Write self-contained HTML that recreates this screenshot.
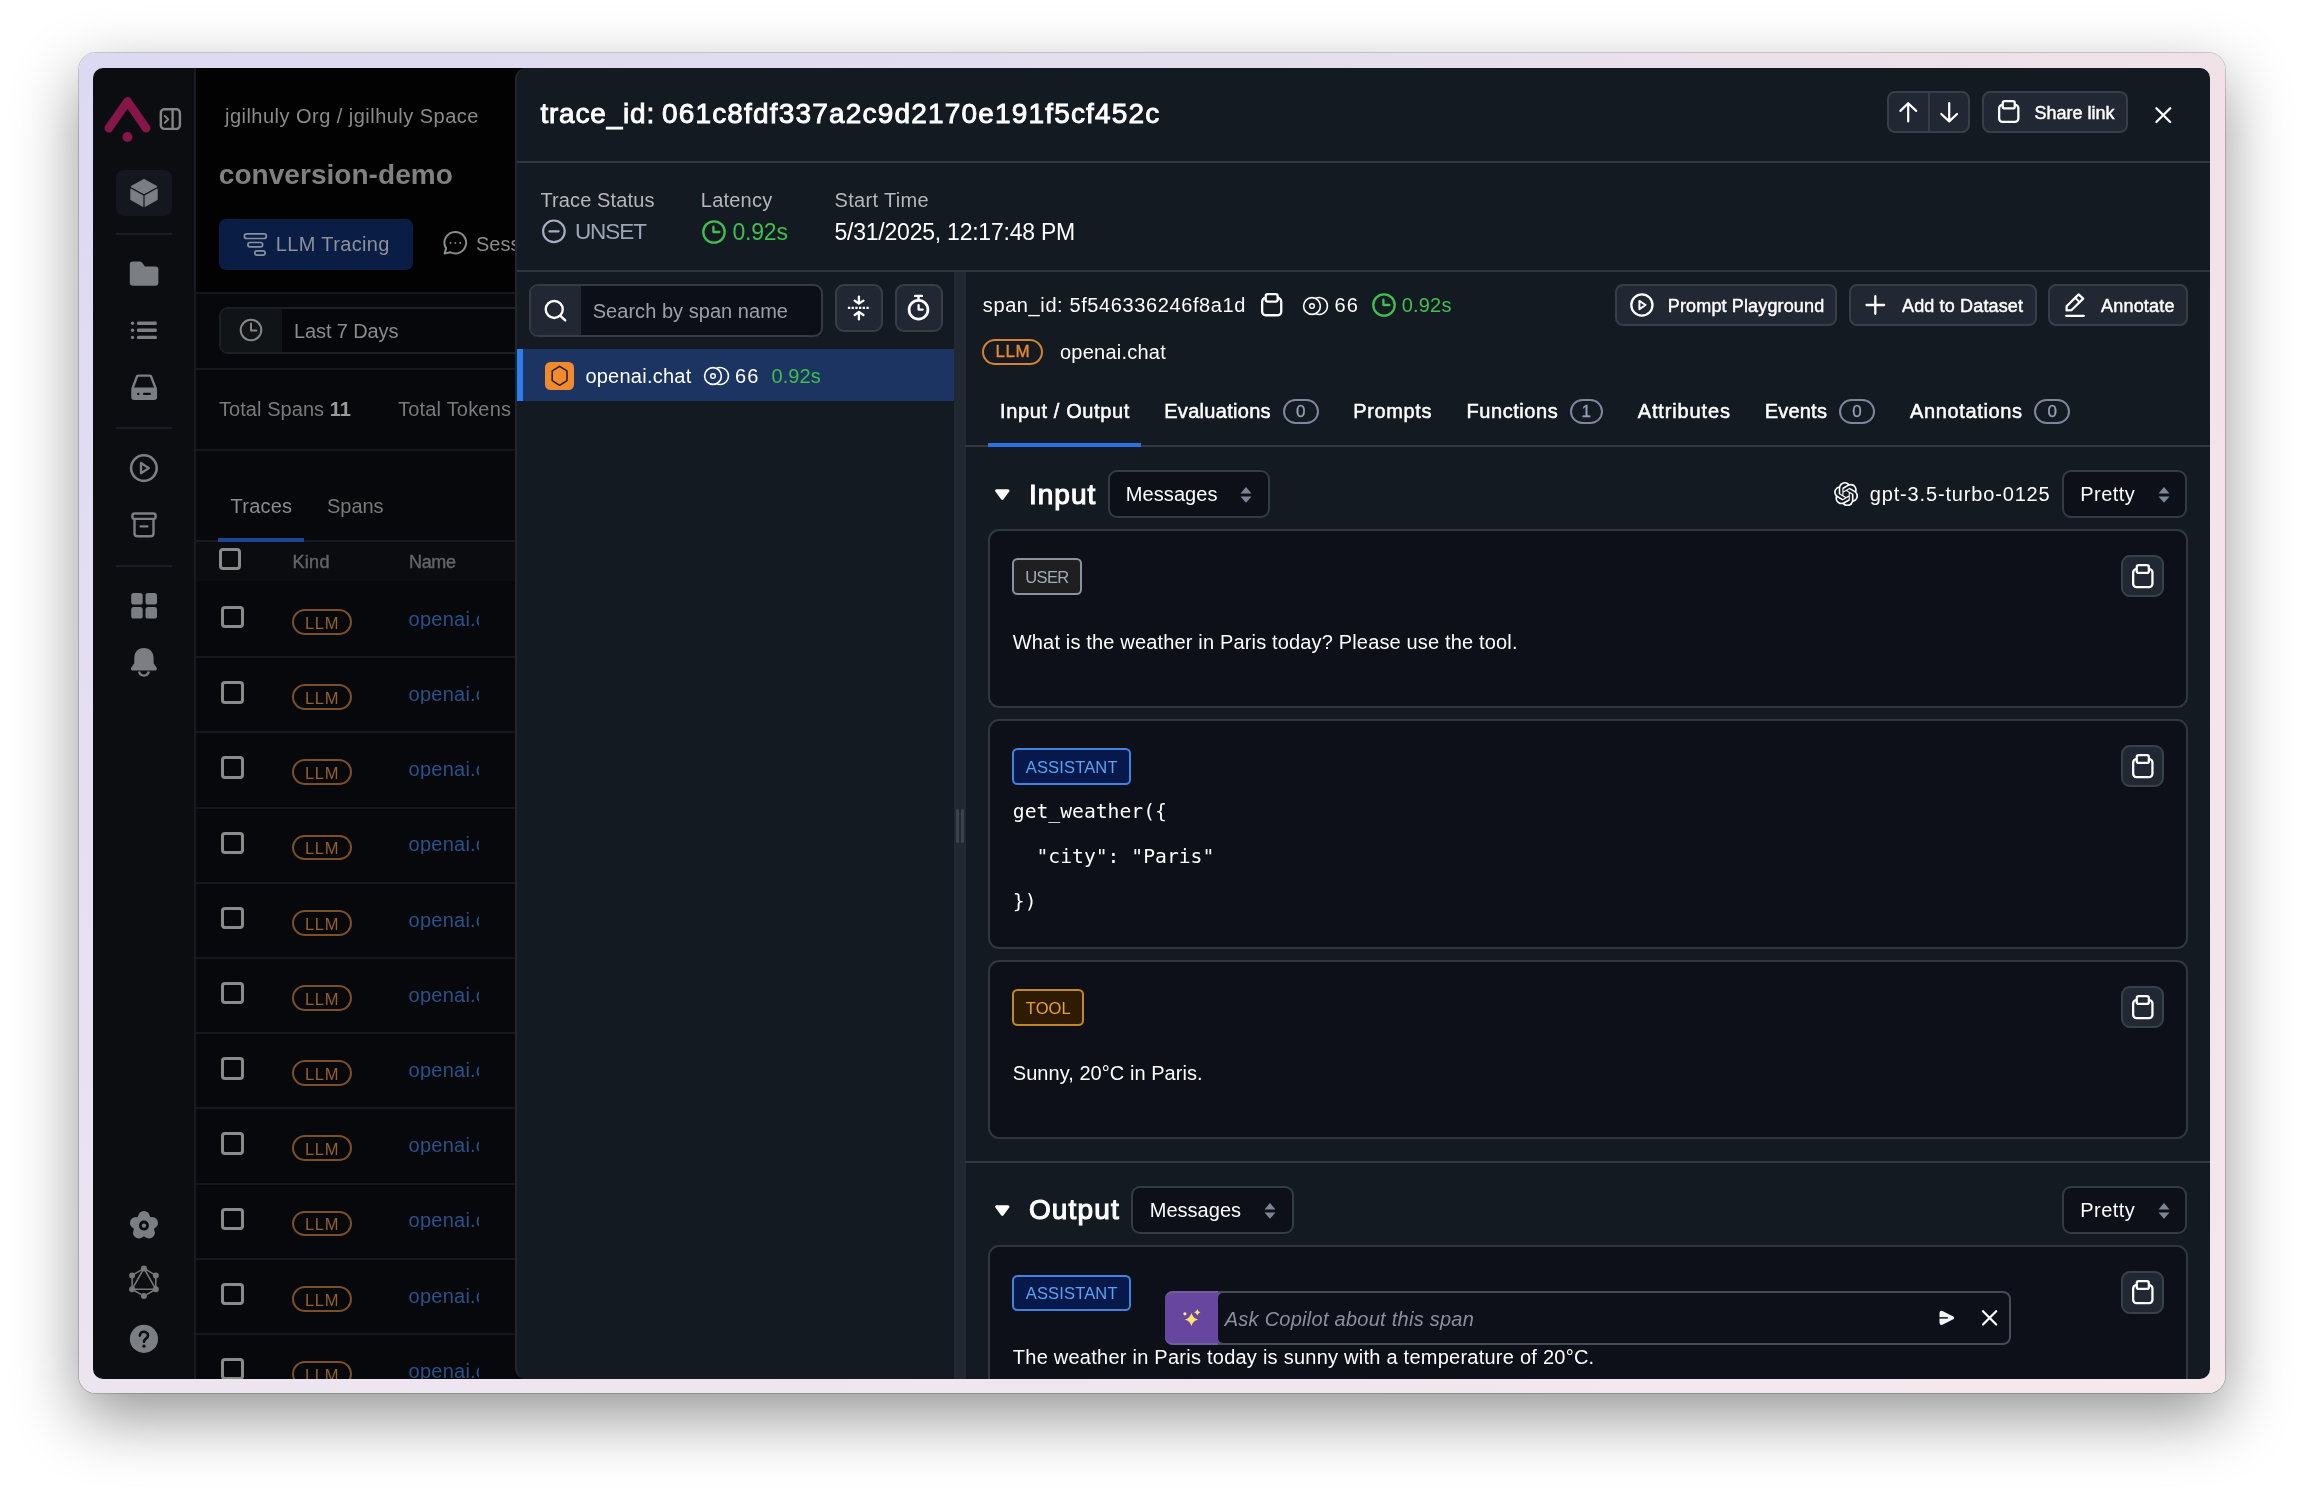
<!DOCTYPE html>
<html lang="en"><head><meta charset="utf-8"><title>Trace details</title>
<style>
html,body{margin:0;padding:0}
body{width:2304px;height:1498px;background:#fff;position:relative;overflow:hidden;font-family:"Liberation Sans",sans-serif}
.b{position:absolute;box-sizing:border-box;display:block}
.t{position:absolute;white-space:pre;line-height:1;display:block}
#frame{position:absolute;left:79px;top:53px;width:2146px;height:1340px;border-radius:17px;background:linear-gradient(180deg,rgba(247,236,238,0) 0%,rgba(247,236,238,.6) 100%),linear-gradient(90deg,#dcd9f2 0%,#e3dfee 50%,#f1e2e8 100%);box-shadow:0 0 0 1px rgba(0,0,0,.17),0 24px 64px rgba(0,0,0,.42)}
#app{will-change:transform;position:absolute;left:0;top:0;width:2304px;height:1498px;clip-path:inset(68px 94px 119px 93px round 10px);background:#07080c}
</style></head><body>
<div id="frame"></div>
<div id="app">
<div class="b" style="left:195.00px;top:68.00px;width:330.00px;height:225.00px;background:#020203;"></div>
<div class="b" style="left:195.00px;top:292.00px;width:330.00px;height:2.00px;background:#16181c;"></div>
<div class="b" style="left:195.00px;top:367.60px;width:330.00px;height:2.00px;background:#15171b;"></div>
<div class="b" style="left:195.00px;top:448.60px;width:330.00px;height:2.00px;background:#15171b;"></div>
<div class="b" style="left:195.00px;top:540.00px;width:330.00px;height:2.00px;background:#181a1f;"></div>
<div class="b" style="left:195.00px;top:542.00px;width:330.00px;height:39.00px;background:#0b0c10;"></div>
<span class="t" style="left:225.00px;top:105.57px;font-size:20px;color:#8b8b8b;letter-spacing:0.474px;">jgilhuly Org / jgilhuly Space</span>
<span class="t" style="left:218.80px;top:160.50px;font-size:28px;color:#808080;font-weight:700;letter-spacing:0.044px;">conversion-demo</span>
<div class="b" style="left:218.50px;top:218.60px;width:194.20px;height:51.00px;background:#0a1d44;border-radius:7px;"></div>
<span class="t" style="left:275.70px;top:234.07px;font-size:20px;color:#8b9099;letter-spacing:0.374px;">LLM Tracing</span>
<span class="t" style="left:476.00px;top:234.07px;font-size:20px;color:#8b8b8b;width:40.00px;overflow:hidden;">Sessions</span>
<div class="b" style="left:218.60px;top:307.00px;width:320.00px;height:47.00px;background:#06070a;border:2px solid #1c1f24;border-radius:9px;"></div>
<div class="b" style="left:220.60px;top:309.00px;width:61.40px;height:43.00px;background:#111417;border-radius:7px 0 0 7px;"></div>
<span class="t" style="left:294.00px;top:321.07px;font-size:20px;color:#8b8b8b;letter-spacing:-0.121px;">Last 7 Days</span>
<span class="t" style="left:219.00px;top:399.07px;font-size:20px;color:#7a7a7a;letter-spacing:0.059px;">Total Spans <b style="color:#9a9a9a">11</b></span>
<span class="t" style="left:398.00px;top:399.07px;font-size:20px;color:#7a7a7a;letter-spacing:0.199px;">Total Tokens</span>
<span class="t" style="left:230.60px;top:496.07px;font-size:20px;color:#8b8b8b;letter-spacing:0.202px;">Traces</span>
<span class="t" style="left:327.00px;top:496.07px;font-size:20px;color:#7a7a7a;letter-spacing:-0.030px;">Spans</span>
<div class="b" style="left:218.00px;top:537.60px;width:85.60px;height:4.00px;background:#1d4796;"></div>
<div class="b" style="left:218.60px;top:548.00px;width:22.40px;height:22.40px;border:3px solid #8a8a8a;border-radius:4px;"></div>
<span class="t" style="left:292.60px;top:553.06px;font-size:18px;color:#636363;-webkit-text-stroke:0.45px #636363;letter-spacing:0.256px;">Kind</span>
<span class="t" style="left:409.00px;top:553.06px;font-size:18px;color:#636363;-webkit-text-stroke:0.45px #636363;letter-spacing:-0.339px;">Name</span>
<div class="b" style="left:195.00px;top:656.20px;width:330.00px;height:2.00px;background:#15171c;"></div>
<div class="b" style="left:221.40px;top:606.00px;width:22.40px;height:22.40px;border:3px solid #8a8a8a;border-radius:4px;"></div>
<div class="b" style="left:292.00px;top:609.00px;width:59.80px;height:25.80px;border:2px solid #7d4f27;border-radius:13px;"></div>
<span class="t" style="left:305.00px;top:614.73px;font-size:16.5px;color:#96602e;letter-spacing:0.645px;">LLM</span>
<span class="t" style="left:408.60px;top:608.87px;font-size:20px;color:#2c5089;letter-spacing:0.238px;width:70.40px;overflow:hidden;">openai.chat</span>
<div class="b" style="left:195.00px;top:731.40px;width:330.00px;height:2.00px;background:#15171c;"></div>
<div class="b" style="left:221.40px;top:681.20px;width:22.40px;height:22.40px;border:3px solid #8a8a8a;border-radius:4px;"></div>
<div class="b" style="left:292.00px;top:684.20px;width:59.80px;height:25.80px;border:2px solid #7d4f27;border-radius:13px;"></div>
<span class="t" style="left:305.00px;top:689.93px;font-size:16.5px;color:#96602e;letter-spacing:0.645px;">LLM</span>
<span class="t" style="left:408.60px;top:684.07px;font-size:20px;color:#2c5089;letter-spacing:0.238px;width:70.40px;overflow:hidden;">openai.chat</span>
<div class="b" style="left:195.00px;top:806.60px;width:330.00px;height:2.00px;background:#15171c;"></div>
<div class="b" style="left:221.40px;top:756.40px;width:22.40px;height:22.40px;border:3px solid #8a8a8a;border-radius:4px;"></div>
<div class="b" style="left:292.00px;top:759.40px;width:59.80px;height:25.80px;border:2px solid #7d4f27;border-radius:13px;"></div>
<span class="t" style="left:305.00px;top:765.13px;font-size:16.5px;color:#96602e;letter-spacing:0.645px;">LLM</span>
<span class="t" style="left:408.60px;top:759.27px;font-size:20px;color:#2c5089;letter-spacing:0.238px;width:70.40px;overflow:hidden;">openai.chat</span>
<div class="b" style="left:195.00px;top:881.80px;width:330.00px;height:2.00px;background:#15171c;"></div>
<div class="b" style="left:221.40px;top:831.60px;width:22.40px;height:22.40px;border:3px solid #8a8a8a;border-radius:4px;"></div>
<div class="b" style="left:292.00px;top:834.60px;width:59.80px;height:25.80px;border:2px solid #7d4f27;border-radius:13px;"></div>
<span class="t" style="left:305.00px;top:840.33px;font-size:16.5px;color:#96602e;letter-spacing:0.645px;">LLM</span>
<span class="t" style="left:408.60px;top:834.47px;font-size:20px;color:#2c5089;letter-spacing:0.238px;width:70.40px;overflow:hidden;">openai.chat</span>
<div class="b" style="left:195.00px;top:957.00px;width:330.00px;height:2.00px;background:#15171c;"></div>
<div class="b" style="left:221.40px;top:906.80px;width:22.40px;height:22.40px;border:3px solid #8a8a8a;border-radius:4px;"></div>
<div class="b" style="left:292.00px;top:909.80px;width:59.80px;height:25.80px;border:2px solid #7d4f27;border-radius:13px;"></div>
<span class="t" style="left:305.00px;top:915.53px;font-size:16.5px;color:#96602e;letter-spacing:0.645px;">LLM</span>
<span class="t" style="left:408.60px;top:909.67px;font-size:20px;color:#2c5089;letter-spacing:0.238px;width:70.40px;overflow:hidden;">openai.chat</span>
<div class="b" style="left:195.00px;top:1032.20px;width:330.00px;height:2.00px;background:#15171c;"></div>
<div class="b" style="left:221.40px;top:982.00px;width:22.40px;height:22.40px;border:3px solid #8a8a8a;border-radius:4px;"></div>
<div class="b" style="left:292.00px;top:985.00px;width:59.80px;height:25.80px;border:2px solid #7d4f27;border-radius:13px;"></div>
<span class="t" style="left:305.00px;top:990.73px;font-size:16.5px;color:#96602e;letter-spacing:0.645px;">LLM</span>
<span class="t" style="left:408.60px;top:984.87px;font-size:20px;color:#2c5089;letter-spacing:0.238px;width:70.40px;overflow:hidden;">openai.chat</span>
<div class="b" style="left:195.00px;top:1107.40px;width:330.00px;height:2.00px;background:#15171c;"></div>
<div class="b" style="left:221.40px;top:1057.20px;width:22.40px;height:22.40px;border:3px solid #8a8a8a;border-radius:4px;"></div>
<div class="b" style="left:292.00px;top:1060.20px;width:59.80px;height:25.80px;border:2px solid #7d4f27;border-radius:13px;"></div>
<span class="t" style="left:305.00px;top:1065.93px;font-size:16.5px;color:#96602e;letter-spacing:0.645px;">LLM</span>
<span class="t" style="left:408.60px;top:1060.07px;font-size:20px;color:#2c5089;letter-spacing:0.238px;width:70.40px;overflow:hidden;">openai.chat</span>
<div class="b" style="left:195.00px;top:1182.60px;width:330.00px;height:2.00px;background:#15171c;"></div>
<div class="b" style="left:221.40px;top:1132.40px;width:22.40px;height:22.40px;border:3px solid #8a8a8a;border-radius:4px;"></div>
<div class="b" style="left:292.00px;top:1135.40px;width:59.80px;height:25.80px;border:2px solid #7d4f27;border-radius:13px;"></div>
<span class="t" style="left:305.00px;top:1141.13px;font-size:16.5px;color:#96602e;letter-spacing:0.645px;">LLM</span>
<span class="t" style="left:408.60px;top:1135.27px;font-size:20px;color:#2c5089;letter-spacing:0.238px;width:70.40px;overflow:hidden;">openai.chat</span>
<div class="b" style="left:195.00px;top:1257.80px;width:330.00px;height:2.00px;background:#15171c;"></div>
<div class="b" style="left:221.40px;top:1207.60px;width:22.40px;height:22.40px;border:3px solid #8a8a8a;border-radius:4px;"></div>
<div class="b" style="left:292.00px;top:1210.60px;width:59.80px;height:25.80px;border:2px solid #7d4f27;border-radius:13px;"></div>
<span class="t" style="left:305.00px;top:1216.33px;font-size:16.5px;color:#96602e;letter-spacing:0.645px;">LLM</span>
<span class="t" style="left:408.60px;top:1210.47px;font-size:20px;color:#2c5089;letter-spacing:0.238px;width:70.40px;overflow:hidden;">openai.chat</span>
<div class="b" style="left:195.00px;top:1333.00px;width:330.00px;height:2.00px;background:#15171c;"></div>
<div class="b" style="left:221.40px;top:1282.80px;width:22.40px;height:22.40px;border:3px solid #8a8a8a;border-radius:4px;"></div>
<div class="b" style="left:292.00px;top:1285.80px;width:59.80px;height:25.80px;border:2px solid #7d4f27;border-radius:13px;"></div>
<span class="t" style="left:305.00px;top:1291.53px;font-size:16.5px;color:#96602e;letter-spacing:0.645px;">LLM</span>
<span class="t" style="left:408.60px;top:1285.67px;font-size:20px;color:#2c5089;letter-spacing:0.238px;width:70.40px;overflow:hidden;">openai.chat</span>
<div class="b" style="left:195.00px;top:1408.20px;width:330.00px;height:2.00px;background:#15171c;"></div>
<div class="b" style="left:221.40px;top:1358.00px;width:22.40px;height:22.40px;border:3px solid #8a8a8a;border-radius:4px;"></div>
<div class="b" style="left:292.00px;top:1361.00px;width:59.80px;height:25.80px;border:2px solid #7d4f27;border-radius:13px;"></div>
<span class="t" style="left:305.00px;top:1366.73px;font-size:16.5px;color:#96602e;letter-spacing:0.645px;">LLM</span>
<span class="t" style="left:408.60px;top:1360.87px;font-size:20px;color:#2c5089;letter-spacing:0.238px;width:70.40px;overflow:hidden;">openai.chat</span>
<div class="b" style="left:93.00px;top:68.00px;width:102.00px;height:1320.00px;background:#0c0d11;"></div>
<div class="b" style="left:194.20px;top:68.00px;width:2.00px;height:1320.00px;background:#191b20;"></div>
<div class="b" style="left:116.00px;top:169.60px;width:55.60px;height:46.00px;background:#15171e;border-radius:8px;"></div>
<div class="b" style="left:116.00px;top:232.50px;width:55.60px;height:2.00px;background:#1b1d23;"></div>
<div class="b" style="left:116.00px;top:427.20px;width:55.60px;height:2.00px;background:#1b1d23;"></div>
<div class="b" style="left:116.00px;top:564.80px;width:55.60px;height:2.00px;background:#1b1d23;"></div>
<div class="b" style="left:515.20px;top:68.00px;width:1700.00px;height:1310.60px;background:#141a22;border-radius:11px 0 0 11px;border-left:2px solid #20262f;"></div>
<div class="b" style="left:516.50px;top:161.20px;width:1700.00px;height:2.00px;background:#31363f;"></div>
<div class="b" style="left:516.50px;top:270.40px;width:1700.00px;height:2.00px;background:#31363f;"></div>
<span class="t" style="left:540.40px;top:100.10px;font-size:28px;color:#fff;-webkit-text-stroke:0.9px #fff;letter-spacing:0.812px;">trace_id:</span>
<span class="t" style="left:661.90px;top:100.10px;font-size:28px;color:#fff;-webkit-text-stroke:0.9px #fff;letter-spacing:1.179px;">061c8fdf337a2c9d2170e191f5cf452c</span>
<div class="b" style="left:1887.00px;top:90.80px;width:83.20px;height:42.00px;background:#222833;border:2px solid #373e48;border-radius:8px;"></div>
<div class="b" style="left:1928.00px;top:92.00px;width:2.00px;height:39.60px;background:#373e48;"></div>
<div class="b" style="left:1982.00px;top:90.80px;width:145.80px;height:42.00px;background:#222833;border:2px solid #373e48;border-radius:8px;"></div>
<span class="t" style="left:2034.60px;top:103.56px;font-size:18px;color:#fff;-webkit-text-stroke:0.45px #fff;letter-spacing:-0.005px;">Share link</span>
<span class="t" style="left:540.40px;top:190.47px;font-size:20px;color:#b5b7bb;letter-spacing:0.124px;">Trace Status</span>
<span class="t" style="left:700.80px;top:190.47px;font-size:20px;color:#b5b7bb;letter-spacing:0.223px;">Latency</span>
<span class="t" style="left:834.50px;top:190.47px;font-size:20px;color:#b5b7bb;letter-spacing:0.340px;">Start Time</span>
<span class="t" style="left:574.90px;top:220.95px;font-size:22.5px;color:#9ba5b8;letter-spacing:-1.041px;">UNSET</span>
<span class="t" style="left:732.40px;top:220.53px;font-size:23px;color:#3fbf4f;letter-spacing:-0.166px;">0.92s</span>
<span class="t" style="left:834.50px;top:220.53px;font-size:23px;color:#fff;letter-spacing:-0.230px;">5/31/2025, 12:17:48 PM</span>
<div class="b" style="left:528.75px;top:284.00px;width:294.30px;height:53.30px;background:#0c0f17;border:2px solid #343b45;border-radius:9px;"></div>
<div class="b" style="left:530.75px;top:286.00px;width:50.30px;height:49.30px;background:#222833;border-radius:7px 0 0 7px;"></div>
<span class="t" style="left:592.70px;top:301.17px;font-size:20px;color:#9aa0aa;letter-spacing:0.041px;">Search by span name</span>
<div class="b" style="left:835.00px;top:284.00px;width:48.00px;height:48.00px;background:#222833;border:2px solid #373e48;border-radius:9px;"></div>
<div class="b" style="left:894.60px;top:284.00px;width:48.00px;height:48.00px;background:#222833;border:2px solid #373e48;border-radius:9px;"></div>
<div class="b" style="left:516.50px;top:349.40px;width:437.30px;height:52.10px;background:#1b3462;"></div>
<div class="b" style="left:516.50px;top:349.40px;width:6.50px;height:52.10px;background:#2f7bf0;"></div>
<div class="b" style="left:545.40px;top:361.50px;width:28.60px;height:28.60px;background:#ef8a2f;border-radius:5.5px;"></div>
<span class="t" style="left:585.40px;top:365.77px;font-size:20px;color:#fff;letter-spacing:0.243px;">openai.chat</span>
<span class="t" style="left:735.00px;top:365.77px;font-size:20px;color:#fff;letter-spacing:1.050px;">66</span>
<span class="t" style="left:771.50px;top:365.77px;font-size:20px;color:#3fbf4f;letter-spacing:0.091px;">0.92s</span>
<div class="b" style="left:954.00px;top:272.40px;width:11.50px;height:1110.00px;background:#212831;"></div>
<div class="b" style="left:956.20px;top:808.80px;width:3.00px;height:34.00px;background:#3b424e;border-radius:1.5px;"></div>
<div class="b" style="left:961.00px;top:808.80px;width:3.00px;height:34.00px;background:#3b424e;border-radius:1.5px;"></div>
<span class="t" style="left:982.80px;top:295.07px;font-size:20px;color:#fff;letter-spacing:0.608px;">span_id: 5f546336246f8a1d</span>
<span class="t" style="left:1334.40px;top:295.07px;font-size:20px;color:#fff;letter-spacing:1.350px;">66</span>
<span class="t" style="left:1401.80px;top:295.07px;font-size:20px;color:#3fbf4f;letter-spacing:0.166px;">0.92s</span>
<div class="b" style="left:982.00px;top:338.80px;width:60.70px;height:25.90px;border:2px solid #d9812e;border-radius:13px;"></div>
<span class="t" style="left:995.60px;top:343.31px;font-size:17px;color:#e8892f;-webkit-text-stroke:0.35px #e8892f;letter-spacing:0.461px;">LLM</span>
<span class="t" style="left:1060.00px;top:342.27px;font-size:20px;color:#fff;letter-spacing:0.228px;">openai.chat</span>
<div class="b" style="left:1615.30px;top:284.40px;width:221.50px;height:41.20px;background:#222833;border:2px solid #373e48;border-radius:8px;"></div>
<span class="t" style="left:1667.80px;top:296.76px;font-size:18px;color:#fff;-webkit-text-stroke:0.45px #fff;letter-spacing:0.144px;">Prompt Playground</span>
<div class="b" style="left:1849.00px;top:284.40px;width:187.50px;height:41.20px;background:#222833;border:2px solid #373e48;border-radius:8px;"></div>
<span class="t" style="left:1902.00px;top:296.76px;font-size:18px;color:#fff;-webkit-text-stroke:0.45px #fff;letter-spacing:0.148px;">Add to Dataset</span>
<div class="b" style="left:2048.00px;top:284.40px;width:139.50px;height:41.20px;background:#222833;border:2px solid #373e48;border-radius:8px;"></div>
<span class="t" style="left:2101.00px;top:296.76px;font-size:18px;color:#fff;-webkit-text-stroke:0.45px #fff;letter-spacing:0.205px;">Annotate</span>
<span class="t" style="left:1000.00px;top:401.47px;font-size:20px;color:#fff;-webkit-text-stroke:0.5px #fff;letter-spacing:0.623px;">Input / Output</span>
<span class="t" style="left:1164.20px;top:401.47px;font-size:20px;color:#fff;-webkit-text-stroke:0.5px #fff;letter-spacing:0.299px;">Evaluations</span>
<span class="t" style="left:1353.20px;top:401.47px;font-size:20px;color:#fff;-webkit-text-stroke:0.5px #fff;letter-spacing:0.655px;">Prompts</span>
<span class="t" style="left:1466.60px;top:401.47px;font-size:20px;color:#fff;-webkit-text-stroke:0.5px #fff;letter-spacing:0.548px;">Functions</span>
<span class="t" style="left:1637.70px;top:401.47px;font-size:20px;color:#fff;-webkit-text-stroke:0.5px #fff;letter-spacing:0.868px;">Attributes</span>
<span class="t" style="left:1764.70px;top:401.47px;font-size:20px;color:#fff;-webkit-text-stroke:0.5px #fff;letter-spacing:0.209px;">Events</span>
<span class="t" style="left:1910.00px;top:401.47px;font-size:20px;color:#fff;-webkit-text-stroke:0.5px #fff;letter-spacing:0.636px;">Annotations</span>
<div class="b" style="left:1282.70px;top:398.70px;width:35.90px;height:24.90px;border:2px solid #7c879f;border-radius:12.5px;"></div>
<span class="t" style="left:1295.95px;top:402.91px;font-size:17px;color:#94a0b7;-webkit-text-stroke:0.3px #94a0b7;">0</span>
<div class="b" style="left:1569.90px;top:398.70px;width:32.80px;height:24.90px;border:2px solid #7c879f;border-radius:12.5px;"></div>
<span class="t" style="left:1581.60px;top:402.91px;font-size:17px;color:#94a0b7;-webkit-text-stroke:0.3px #94a0b7;">1</span>
<div class="b" style="left:1838.70px;top:398.70px;width:36.60px;height:24.90px;border:2px solid #7c879f;border-radius:12.5px;"></div>
<span class="t" style="left:1852.30px;top:402.91px;font-size:17px;color:#94a0b7;-webkit-text-stroke:0.3px #94a0b7;">0</span>
<div class="b" style="left:2033.80px;top:398.70px;width:36.60px;height:24.90px;border:2px solid #7c879f;border-radius:12.5px;"></div>
<span class="t" style="left:2047.40px;top:402.91px;font-size:17px;color:#94a0b7;-webkit-text-stroke:0.3px #94a0b7;">0</span>
<div class="b" style="left:965.40px;top:445.10px;width:1250.00px;height:2.00px;background:#31363f;"></div>
<div class="b" style="left:988.00px;top:442.60px;width:153.40px;height:4.50px;background:#2a72e3;"></div>
<span class="t" style="left:1028.90px;top:480.50px;font-size:28px;color:#fff;-webkit-text-stroke:1.1px #fff;letter-spacing:1.030px;">Input</span>
<div class="b" style="left:1107.80px;top:470.00px;width:162.50px;height:47.80px;background:#0d1019;border:2px solid #343b45;border-radius:9px;"></div>
<span class="t" style="left:1125.80px;top:483.67px;font-size:20px;color:#fff;letter-spacing:0.078px;">Messages</span>
<span class="t" style="left:1869.80px;top:484.07px;font-size:20px;color:#fff;letter-spacing:0.837px;">gpt-3.5-turbo-0125</span>
<div class="b" style="left:2061.70px;top:469.80px;width:125.70px;height:47.80px;background:#0d1019;border:2px solid #343b45;border-radius:9px;"></div>
<span class="t" style="left:2080.20px;top:484.07px;font-size:20px;color:#fff;letter-spacing:0.490px;">Pretty</span>
<div class="b" style="left:988.30px;top:528.95px;width:1199.30px;height:178.80px;background:#0d1019;border:2px solid #31373f;border-radius:11px;"></div>
<div class="b" style="left:1012.20px;top:558.30px;width:70.00px;height:36.70px;background:#1f1f1f;border:2px solid #8a92a0;border-radius:5.5px;"></div>
<span class="t" style="left:1025.30px;top:569.03px;font-size:16.5px;color:#a3abba;letter-spacing:-0.648px;">USER</span>
<span class="t" style="left:1012.80px;top:632.27px;font-size:20px;color:#fff;letter-spacing:0.161px;">What is the weather in Paris today? Please use the tool.</span>
<div class="b" style="left:2121.00px;top:554.70px;width:42.50px;height:42.50px;background:#222833;border:2px solid #394049;border-radius:9px;"></div>
<div class="b" style="left:988.30px;top:718.65px;width:1199.30px;height:230.10px;background:#0d1019;border:2px solid #31373f;border-radius:11px;"></div>
<div class="b" style="left:1012.20px;top:748.30px;width:118.40px;height:36.70px;background:#07194a;border:2px solid #4283e0;border-radius:5.5px;"></div>
<span class="t" style="left:1025.80px;top:758.83px;font-size:16.5px;color:#5aa2f7;letter-spacing:0.154px;">ASSISTANT</span>
<span class="t" style="left:1012.80px;top:802.13px;font-size:19.7px;color:#fff;font-family:'DejaVu Sans Mono', 'Liberation Mono', monospace;">get_weather({</span>
<span class="t" style="left:1012.80px;top:847.33px;font-size:19.7px;color:#fff;font-family:'DejaVu Sans Mono', 'Liberation Mono', monospace;">  "city": "Paris"</span>
<span class="t" style="left:1012.80px;top:892.33px;font-size:19.7px;color:#fff;font-family:'DejaVu Sans Mono', 'Liberation Mono', monospace;">})</span>
<div class="b" style="left:2121.00px;top:744.70px;width:42.50px;height:42.50px;background:#222833;border:2px solid #394049;border-radius:9px;"></div>
<div class="b" style="left:988.30px;top:960.05px;width:1199.30px;height:179.00px;background:#0d1019;border:2px solid #31373f;border-radius:11px;"></div>
<div class="b" style="left:1012.20px;top:989.40px;width:72.20px;height:36.70px;background:#2f1a05;border:2px solid #c0872b;border-radius:5.5px;"></div>
<span class="t" style="left:1025.80px;top:1000.43px;font-size:16.5px;color:#e0a33a;letter-spacing:0.053px;">TOOL</span>
<span class="t" style="left:1012.80px;top:1062.77px;font-size:20px;color:#fff;letter-spacing:0.044px;">Sunny, 20°C in Paris.</span>
<div class="b" style="left:2121.00px;top:985.70px;width:42.50px;height:42.50px;background:#222833;border:2px solid #394049;border-radius:9px;"></div>
<div class="b" style="left:965.40px;top:1161.20px;width:1250.00px;height:2.00px;background:#31363f;"></div>
<span class="t" style="left:1028.90px;top:1195.70px;font-size:28px;color:#fff;-webkit-text-stroke:1.1px #fff;letter-spacing:1.188px;">Output</span>
<div class="b" style="left:1131.40px;top:1186.00px;width:162.80px;height:47.50px;background:#0d1019;border:2px solid #343b45;border-radius:9px;"></div>
<span class="t" style="left:1149.70px;top:1199.77px;font-size:20px;color:#fff;letter-spacing:0.035px;">Messages</span>
<div class="b" style="left:2061.70px;top:1186.00px;width:125.70px;height:47.60px;background:#0d1019;border:2px solid #343b45;border-radius:9px;"></div>
<span class="t" style="left:2080.20px;top:1200.47px;font-size:20px;color:#fff;letter-spacing:0.490px;">Pretty</span>
<div class="b" style="left:988.30px;top:1244.95px;width:1199.30px;height:155.05px;background:#0d1019;border:2px solid #31373f;border-radius:11px;"></div>
<div class="b" style="left:1012.20px;top:1275.00px;width:118.40px;height:36.30px;background:#07194a;border:2px solid #4283e0;border-radius:5.5px;"></div>
<span class="t" style="left:1025.80px;top:1285.43px;font-size:16.5px;color:#5aa2f7;letter-spacing:0.154px;">ASSISTANT</span>
<span class="t" style="left:1012.80px;top:1347.47px;font-size:20px;color:#fff;letter-spacing:0.247px;">The weather in Paris today is sunny with a temperature of 20°C.</span>
<div class="b" style="left:2121.00px;top:1271.00px;width:42.50px;height:42.50px;background:#222833;border:2px solid #394049;border-radius:9px;"></div>
<div class="b" style="left:1165.00px;top:1291.00px;width:846.00px;height:54.20px;background:#0d1019;border:2px solid #454b57;border-radius:8px;"></div>
<div class="b" style="left:1165.00px;top:1291.00px;width:52.80px;height:54.20px;background:#66469e;border-radius:8px 0 0 8px;border-top:2px solid #6f5f9c;border-bottom:2px solid #6f5f9c;"></div>
<div class="b" style="left:1215.00px;top:1293.00px;width:9.00px;height:50.20px;background:#66469e;"></div>
<div class="b" style="left:1217.60px;top:1293.00px;width:100.00px;height:50.20px;background:#0d1019;border-radius:5px 0 0 5px;"></div>
<span class="t" style="left:1224.70px;top:1308.67px;font-size:20px;color:#8a909b;font-style:italic;letter-spacing:0.262px;">Ask Copilot about this span</span>
<svg class="b" style="left:98.00px;top:90.00px" width="60.00" height="58.00" viewBox="98.00 90.00 60.00 58.00" fill="none"><path d="M108.8 128.2 L127.5 101.4 L146.2 128.2" stroke="#861648" stroke-width="8.6" stroke-linecap="round" stroke-linejoin="round"/><circle cx="127.5" cy="137" r="5" fill="#861648"/></svg>
<svg class="b" style="left:156.00px;top:104.00px" width="30.00" height="30.00" viewBox="156.00 104.00 30.00 30.00" fill="none"><rect x="160.8" y="109.3" width="19.1" height="19.6" rx="3.6" stroke="#858585" stroke-width="2.4"/><path d="M172.6 109.5V128.7" stroke="#858585" stroke-width="2.4"/><path d="M164.8 116 L168.3 119.4 L164.8 122.8" stroke="#858585" stroke-width="2" stroke-linecap="round" stroke-linejoin="round"/></svg>
<svg class="b" style="left:128.00px;top:176.00px" width="32.00" height="34.00" viewBox="128.00 176.00 32.00 34.00" fill="none"><path d="M144 179.4 L156.6 186.6 L144 193.4 L131.4 186.6 Z" fill="#7b7e82" stroke="#7b7e82" stroke-width="1.2" stroke-linejoin="round"/><path d="M130.9 189.3 L142.8 195.8 V206.2 L130.9 199.6 Z" fill="#7b7e82" stroke="#7b7e82" stroke-width="1.2" stroke-linejoin="round"/><path d="M157.1 189.3 L145.2 195.8 V206.2 L157.1 199.6 Z" fill="#7b7e82" stroke="#7b7e82" stroke-width="1.2" stroke-linejoin="round"/></svg>
<svg class="b" style="left:127.00px;top:259.00px" width="34.00" height="30.00" viewBox="127.00 259.00 34.00 30.00" fill="none"><path d="M133 261.6 H139.6 Q141 261.6 142 262.6 L145 266.4 H155.2 Q158.4 266.4 158.4 269.6 V282.6 Q158.4 285.8 155.2 285.8 H133 Q129.8 285.8 129.8 282.6 V264.8 Q129.8 261.6 133 261.6 Z" fill="#7b7e82"/></svg>
<svg class="b" style="left:128.00px;top:318.00px" width="32.00" height="24.00" viewBox="128.00 318.00 32.00 24.00" fill="none"><circle cx="132.5" cy="323.2" r="1.7" fill="#7b7e82"/><rect x="137" y="321.5" width="19.8" height="3.4" rx="1.2" fill="#7b7e82"/><circle cx="132.5" cy="330.3" r="1.7" fill="#7b7e82"/><rect x="137" y="328.6" width="19.8" height="3.4" rx="1.2" fill="#7b7e82"/><circle cx="132.5" cy="337.4" r="1.7" fill="#7b7e82"/><rect x="137" y="335.7" width="19.8" height="3.4" rx="1.2" fill="#7b7e82"/></svg>
<svg class="b" style="left:128.00px;top:372.00px" width="32.00" height="30.00" viewBox="128.00 372.00 32.00 30.00" fill="none"><path d="M132.3 389 L137 376.4 Q137.4 375.6 138.4 375.6 H149.6 Q150.6 375.6 151 376.4 L155.9 389" stroke="#7b7e82" stroke-width="2.4" stroke-linejoin="round"/><rect x="131.2" y="387.6" width="25.9" height="12.3" rx="3" fill="#7b7e82"/><circle cx="138.3" cy="393.9" r="1.2" fill="#0c0d11"/><rect x="143" y="392.8" width="8" height="2.2" rx="1.1" fill="#0c0d11"/></svg>
<svg class="b" style="left:128.00px;top:452.00px" width="32.00" height="32.00" viewBox="128.00 452.00 32.00 32.00" fill="none"><circle cx="143.9" cy="468.1" r="12.8" stroke="#7b7e82" stroke-width="2.6"/><path d="M141 463 L148.8 468.1 L141 473.2 Z" stroke="#7b7e82" stroke-width="2.3" stroke-linejoin="round"/></svg>
<svg class="b" style="left:128.00px;top:510.00px" width="32.00" height="30.00" viewBox="128.00 510.00 32.00 30.00" fill="none"><rect x="132.4" y="513.5" width="23.2" height="5.4" rx="2.2" stroke="#7b7e82" stroke-width="2.4"/><path d="M134.5 519.5 V533.2 Q134.5 536.3 137.6 536.3 H150.4 Q153.5 536.3 153.5 533.2 V519.5" stroke="#7b7e82" stroke-width="2.4"/><path d="M140.6 526.4 H147.4" stroke="#7b7e82" stroke-width="2.2" stroke-linecap="round"/></svg>
<svg class="b" style="left:128.00px;top:590.00px" width="32.00" height="32.00" viewBox="128.00 590.00 32.00 32.00" fill="none"><rect x="131.2" y="593.1" width="11.5" height="11.4" rx="2.6" fill="#7b7e82"/><rect x="131.2" y="607.1" width="11.5" height="11.4" rx="2.6" fill="#7b7e82"/><rect x="145.5" y="593.1" width="11.5" height="11.4" rx="2.6" fill="#7b7e82"/><rect x="145.5" y="607.1" width="11.5" height="11.4" rx="2.6" fill="#7b7e82"/></svg>
<svg class="b" style="left:128.00px;top:645.00px" width="32.00" height="36.00" viewBox="128.00 645.00 32.00 36.00" fill="none"><path d="M143.9 647.9 C138.2 647.9 134.3 652 134.3 657.8 V663.2 L131.3 667.4 C130.4 668.8 131.2 670.6 133 670.6 H154.8 C156.6 670.6 157.4 668.8 156.5 667.4 L153.6 663.2 V657.8 C153.6 652 149.6 647.9 143.9 647.9 Z" fill="#7b7e82"/><path d="M139 671.6 A5 5 0 0 0 148.8 671.6" stroke="#7b7e82" stroke-width="2.3" fill="none"/></svg>
<svg class="b" style="left:128.00px;top:1209.00px" width="32.00" height="34.00" viewBox="128.00 1209.00 32.00 34.00" fill="none"><circle cx="143.95" cy="1217.00" r="5.9" fill="#7b7e82"/><circle cx="135.77" cy="1222.94" r="5.9" fill="#7b7e82"/><circle cx="138.90" cy="1232.56" r="5.9" fill="#7b7e82"/><circle cx="149.00" cy="1232.56" r="5.9" fill="#7b7e82"/><circle cx="152.13" cy="1222.94" r="5.9" fill="#7b7e82"/><circle cx="143.95" cy="1225.6" r="10.8" fill="#7b7e82"/><circle cx="143.95" cy="1225.6" r="3.6" stroke="#0c0d11" stroke-width="2.8" fill="#7b7e82"/></svg>
<svg class="b" style="left:126.00px;top:1262.00px" width="36.00" height="40.00" viewBox="126.00 1262.00 36.00 40.00" fill="none"><path d="M143.95 1268.4 L155.8 1275.4 L155.8 1289.2 L143.95 1296.1 L132.1 1289.2 L132.1 1275.4Z" stroke="#777" stroke-width="1.6"/><path d="M143.95 1268.4 L155.8 1289.2 L132.1 1289.2 Z" stroke="#777" stroke-width="1.6"/><circle cx="143.95" cy="1268.4" r="3" fill="#777"/><circle cx="155.8" cy="1275.4" r="3" fill="#777"/><circle cx="155.8" cy="1289.2" r="3" fill="#777"/><circle cx="143.95" cy="1296.1" r="3" fill="#777"/><circle cx="132.1" cy="1289.2" r="3" fill="#777"/><circle cx="132.1" cy="1275.4" r="3" fill="#777"/></svg>
<svg class="b" style="left:128.00px;top:1323.00px" width="32.00" height="32.00" viewBox="128.00 1323.00 32.00 32.00" fill="none"><circle cx="143.95" cy="1338.9" r="14.1" fill="#7b7e82"/><path d="M139.9 1335.6 C139.9 1330.6 148 1330.6 148 1335.4 C148 1338.4 144 1338.6 144 1341.8" stroke="#0c0d11" stroke-width="2.6" stroke-linecap="round" fill="none"/><circle cx="144" cy="1346.2" r="1.6" fill="#0c0d11"/></svg>
<svg class="b" style="left:240.00px;top:230.00px" width="32.00" height="30.00" viewBox="240.00 230.00 32.00 30.00" fill="none"><rect x="244.4" y="233.9" width="21.9" height="4.6" rx="2.3" stroke="#8790a3" stroke-width="1.7"/><rect x="247.9" y="242.5" width="14.8" height="4.4" rx="2.2" stroke="#8790a3" stroke-width="1.7"/><rect x="254.8" y="250.8" width="10.3" height="4.4" rx="2.2" stroke="#8790a3" stroke-width="1.7"/></svg>
<svg class="b" style="left:440.00px;top:228.00px" width="32.00" height="30.00" viewBox="440.00 228.00 32.00 30.00" fill="none"><path d="M455.3 231.9 A10.8 10.8 0 1 1 450.2 252.2 L444.6 253.6 L446.1 248.4 A10.8 10.8 0 0 1 455.3 231.9 Z" stroke="#8a8d90" stroke-width="2" stroke-linejoin="round"/><rect x="449.7" y="242.1" width="1.7" height="1.7" fill="#8a8d90"/><rect x="454.5" y="242.1" width="1.7" height="1.7" fill="#8a8d90"/><rect x="459.4" y="242.1" width="1.7" height="1.7" fill="#8a8d90"/></svg>
<svg class="b" style="left:236.00px;top:315.00px" width="30.00" height="30.00" viewBox="236.00 315.00 30.00 30.00" fill="none"><circle cx="251" cy="330" r="10.3" stroke="#858585" stroke-width="2"/><path d="M251 323.6 V330.4 H256.4" stroke="#858585" stroke-width="2" stroke-linecap="round" stroke-linejoin="round"/></svg>
<svg class="b" style="left:540.00px;top:217.00px" width="28.00" height="28.00" viewBox="540.00 217.00 28.00 28.00" fill="none"><circle cx="553.9" cy="231.3" r="10.8" stroke="#a4aec2" stroke-width="2.2"/><path d="M549.4 231.3 H558.6" stroke="#a4aec2" stroke-width="2.2" stroke-linecap="round"/></svg>
<svg class="b" style="left:700.20px;top:217.60px" width="28.00" height="28.00" viewBox="700.20 217.60 28.00 28.00" fill="none"><circle cx="714.2" cy="231.6" r="10.7" stroke="#3fbf4f" stroke-width="2.3"/><path d="M713.6 226.2 V231.6 H719.6" stroke="#3fbf4f" stroke-width="2.3" stroke-linecap="round" stroke-linejoin="round"/></svg>
<svg class="b" style="left:1370.00px;top:290.90px" width="28.00" height="28.00" viewBox="1370.00 290.90 28.00 28.00" fill="none"><circle cx="1384" cy="304.9" r="10.7" stroke="#3fbf4f" stroke-width="2.3"/><path d="M1383.4 299.5 V304.9 H1389.4" stroke="#3fbf4f" stroke-width="2.3" stroke-linecap="round" stroke-linejoin="round"/></svg>
<svg class="b" style="left:1895.00px;top:98.00px" width="70.00" height="28.00" viewBox="1895.00 98.00 70.00 28.00" fill="none"><path d="M1908.2 121.4 V103.4 M1900.4 110.9 L1908.2 103.2 L1916.2 110.9" stroke="#ffffff" stroke-width="2.2" stroke-linecap="round" stroke-linejoin="round"/><path d="M1949.2 103 V121 M1941.3 114 L1949.2 121.4 L1957 114" stroke="#ffffff" stroke-width="2.2" stroke-linecap="round" stroke-linejoin="round"/></svg>
<svg class="b" style="left:1995.30px;top:97.40px" width="27.50" height="29.00" viewBox="1995.30 97.40 27.50 29.00" fill="none"><rect x="1999.45" y="105.32" width="19.20" height="16.93" rx="3.4" stroke="#ffffff" stroke-width="2.3"/><rect x="2003.03" y="101.55" width="12.04" height="7.25" rx="2" stroke="#ffffff" stroke-width="2.3" fill="#222833"/></svg>
<svg class="b" style="left:1257.50px;top:290.20px" width="27.40" height="29.40" viewBox="1257.50 290.20 27.40 29.40" fill="none"><rect x="1261.65" y="298.19" width="19.10" height="17.26" rx="3.4" stroke="#ffffff" stroke-width="2.3"/><rect x="1265.21" y="294.35" width="11.97" height="7.41" rx="2" stroke="#ffffff" stroke-width="2.3" fill="#141a22"/></svg>
<svg class="b" style="left:2128.50px;top:560.70px" width="27.60" height="30.35" viewBox="2128.50 560.70 27.60 30.35" fill="none"><rect x="2132.65" y="568.84" width="19.30" height="18.06" rx="3.4" stroke="#ffffff" stroke-width="2.3"/><rect x="2136.25" y="564.85" width="12.11" height="7.81" rx="2" stroke="#ffffff" stroke-width="2.3" fill="#222833"/></svg>
<svg class="b" style="left:2128.50px;top:750.70px" width="27.60" height="30.35" viewBox="2128.50 750.70 27.60 30.35" fill="none"><rect x="2132.65" y="758.84" width="19.30" height="18.06" rx="3.4" stroke="#ffffff" stroke-width="2.3"/><rect x="2136.25" y="754.85" width="12.11" height="7.81" rx="2" stroke="#ffffff" stroke-width="2.3" fill="#222833"/></svg>
<svg class="b" style="left:2128.50px;top:991.70px" width="27.60" height="30.35" viewBox="2128.50 991.70 27.60 30.35" fill="none"><rect x="2132.65" y="999.84" width="19.30" height="18.06" rx="3.4" stroke="#ffffff" stroke-width="2.3"/><rect x="2136.25" y="995.85" width="12.11" height="7.81" rx="2" stroke="#ffffff" stroke-width="2.3" fill="#222833"/></svg>
<svg class="b" style="left:2128.50px;top:1277.00px" width="27.60" height="30.35" viewBox="2128.50 1277.00 27.60 30.35" fill="none"><rect x="2132.65" y="1285.14" width="19.30" height="18.06" rx="3.4" stroke="#ffffff" stroke-width="2.3"/><rect x="2136.25" y="1281.15" width="12.11" height="7.81" rx="2" stroke="#ffffff" stroke-width="2.3" fill="#222833"/></svg>
<svg class="b" style="left:2150.00px;top:102.00px" width="28.00" height="28.00" viewBox="2150.00 102.00 28.00 28.00" fill="none"><path d="M2156.4 108.2 L2170.2 122 M2170.2 108.2 L2156.4 122" stroke="#ffffff" stroke-width="2.3" stroke-linecap="round"/></svg>
<svg class="b" style="left:540.00px;top:296.00px" width="30.00" height="30.00" viewBox="540.00 296.00 30.00 30.00" fill="none"><circle cx="554.25" cy="309.45" r="8.5" stroke="#ffffff" stroke-width="2.4"/><path d="M560.4 315.9 L565.2 320.4" stroke="#ffffff" stroke-width="2.4" stroke-linecap="round"/></svg>
<svg class="b" style="left:845.00px;top:292.00px" width="30.00" height="32.00" viewBox="845.00 292.00 30.00 32.00" fill="none"><path d="M847.9 307.9 H870.2" stroke="#ffffff" stroke-width="2.2" stroke-dasharray="2.3 1.4"/><path d="M858.9 296.6 V303 M854.7 300.6 L858.9 303.6 L863.4 300.6" stroke="#ffffff" stroke-width="2.3" stroke-linecap="round" stroke-linejoin="round"/><path d="M858.9 319.4 V312.6 M854.7 315 L858.9 312 L863.4 315" stroke="#ffffff" stroke-width="2.3" stroke-linecap="round" stroke-linejoin="round"/></svg>
<svg class="b" style="left:904.00px;top:292.00px" width="30.00" height="32.00" viewBox="904.00 292.00 30.00 32.00" fill="none"><circle cx="918.5" cy="309.7" r="9.4" stroke="#ffffff" stroke-width="2.7"/><path d="M915.2 295.9 H921.9 M918.5 296 V299.6" stroke="#ffffff" stroke-width="2.4" stroke-linecap="round"/><path d="M918.6 305.2 V309.6 H922.6" stroke="#ffffff" stroke-width="2.3" stroke-linecap="round" stroke-linejoin="round"/></svg>
<svg class="b" style="left:548.00px;top:363.00px" width="24.00" height="26.00" viewBox="548.00 363.00 24.00 26.00" fill="none"><path d="M559.6 366.3 L567 370.9 V380.6 L559.6 385.3 L552.2 380.6 V370.9 Z" stroke="#2a1a0a" stroke-width="1.5" stroke-linejoin="round"/></svg>
<svg class="b" style="left:701.10px;top:364.40px" width="34.00" height="24.00" viewBox="701.10 364.40 34.00 24.00" fill="none"><circle cx="713.1" cy="376.4" r="8.4" stroke="#ffffff" stroke-width="1.6"/><circle cx="713.1" cy="376.4" r="2.3" stroke="#ffffff" stroke-width="1.5"/><path d="M716.60 368.76 A8.4 8.4 0 1 1 716.60 384.04" stroke="#ffffff" stroke-width="1.6"/><path d="M714.10 371.90 A8.4 8.4 0 0 0 714.10 380.90" stroke="#ffffff" stroke-width="0"/></svg>
<svg class="b" style="left:1300.30px;top:293.50px" width="34.00" height="24.00" viewBox="1300.30 293.50 34.00 24.00" fill="none"><circle cx="1312.3" cy="305.5" r="8.4" stroke="#ffffff" stroke-width="1.6"/><circle cx="1312.3" cy="305.5" r="2.3" stroke="#ffffff" stroke-width="1.5"/><path d="M1315.80 297.86 A8.4 8.4 0 1 1 1315.80 313.14" stroke="#ffffff" stroke-width="1.6"/><path d="M1313.30 301.00 A8.4 8.4 0 0 0 1313.30 310.00" stroke="#ffffff" stroke-width="0"/></svg>
<svg class="b" style="left:1628.00px;top:291.00px" width="28.00" height="28.00" viewBox="1628.00 291.00 28.00 28.00" fill="none"><circle cx="1641.9" cy="305" r="10.6" stroke="#ffffff" stroke-width="2.3"/><path d="M1639.4 300.9 L1645.6 305 L1639.4 309.1 Z" stroke="#ffffff" stroke-width="2" stroke-linejoin="round"/></svg>
<svg class="b" style="left:1862.00px;top:292.00px" width="28.00" height="28.00" viewBox="1862.00 292.00 28.00 28.00" fill="none"><path d="M1875.3 296.2 V313.8 M1866.5 305 H1884.1" stroke="#ffffff" stroke-width="2.3" stroke-linecap="round"/></svg>
<svg class="b" style="left:2060.00px;top:288.00px" width="30.00" height="32.00" viewBox="2060.00 288.00 30.00 32.00" fill="none"><path d="M2066.6 310.4 V306.2 L2078.6 294.4 L2083.2 298.6 L2071.4 310.2 Z" stroke="#ffffff" stroke-width="2.2" stroke-linejoin="round"/><path d="M2075.4 298 L2079.6 302.1" stroke="#ffffff" stroke-width="2"/><path d="M2066.2 315.8 H2083.8" stroke="#ffffff" stroke-width="2.3" stroke-linecap="round"/></svg>
<svg class="b" style="left:992.00px;top:487.10px" width="22.00" height="18.00" viewBox="992.00 487.10 22.00 18.00" fill="none"><path d="M996.6 490.8 H1008 L1002.3 498.5 Z" fill="#ffffff" stroke="#ffffff" stroke-width="3" stroke-linejoin="round"/></svg>
<svg class="b" style="left:992.00px;top:1203.10px" width="22.00" height="18.00" viewBox="992.00 1203.10 22.00 18.00" fill="none"><path d="M996.6 1206.8 H1008 L1002.3 1214.5 Z" fill="#ffffff" stroke="#ffffff" stroke-width="3" stroke-linejoin="round"/></svg>
<svg class="b" style="left:1238.40px;top:483.80px" width="16.00" height="22.00" viewBox="1238.40 483.80 16.00 22.00" fill="none"><path d="M1240.9 493.2 L1246.4 486.90000000000003 L1251.9 493.2 Z" fill="#7d8594"/><path d="M1240.9 496.3 L1246.4 502.6 L1251.9 496.3 Z" fill="#7d8594"/></svg>
<svg class="b" style="left:2155.50px;top:483.80px" width="16.00" height="22.00" viewBox="2155.50 483.80 16.00 22.00" fill="none"><path d="M2158.0 493.2 L2163.5 486.90000000000003 L2169.0 493.2 Z" fill="#7d8594"/><path d="M2158.0 496.3 L2163.5 502.6 L2169.0 496.3 Z" fill="#7d8594"/></svg>
<svg class="b" style="left:1262.20px;top:1199.60px" width="16.00" height="22.00" viewBox="1262.20 1199.60 16.00 22.00" fill="none"><path d="M1264.7 1209.0 L1270.2 1202.6999999999998 L1275.7 1209.0 Z" fill="#7d8594"/><path d="M1264.7 1212.1 L1270.2 1218.3999999999999 L1275.7 1212.1 Z" fill="#7d8594"/></svg>
<svg class="b" style="left:2155.50px;top:1199.60px" width="16.00" height="22.00" viewBox="2155.50 1199.60 16.00 22.00" fill="none"><path d="M2158.0 1209.0 L2163.5 1202.6999999999998 L2169.0 1209.0 Z" fill="#7d8594"/><path d="M2158.0 1212.1 L2163.5 1218.3999999999999 L2169.0 1212.1 Z" fill="#7d8594"/></svg>
<svg class="b" style="left:1833.6px;top:481.6px" width="24.2" height="24.2" viewBox="0 0 24 24"><path fill="#fff" d="M22.2819 9.8211a5.9847 5.9847 0 0 0-.5157-4.9108 6.0462 6.0462 0 0 0-6.5098-2.9A6.0651 6.0651 0 0 0 4.9807 4.1818a5.9847 5.9847 0 0 0-3.9977 2.9 6.0462 6.0462 0 0 0 .7427 7.0966 5.98 5.98 0 0 0 .511 4.9107 6.051 6.051 0 0 0 6.5146 2.9001A5.9847 5.9847 0 0 0 13.2599 24a6.0557 6.0557 0 0 0 5.7718-4.2058 5.9894 5.9894 0 0 0 3.9977-2.9001 6.0557 6.0557 0 0 0-.7475-7.0729zm-9.022 12.6081a4.4755 4.4755 0 0 1-2.8764-1.0408l.1419-.0804 4.7783-2.7582a.7948.7948 0 0 0 .3927-.6813v-6.7369l2.02 1.1686a.071.071 0 0 1 .038.0615v5.5826a4.504 4.504 0 0 1-4.4945 4.4944zm-9.6607-4.1254a4.4708 4.4708 0 0 1-.5346-3.0137l.142.0852 4.783 2.7582a.7712.7712 0 0 0 .7806 0l5.8428-3.3685v2.3324a.0804.0804 0 0 1-.0332.0615L9.74 19.9502a4.4992 4.4992 0 0 1-6.1408-1.6464zM2.3408 7.8956a4.485 4.485 0 0 1 2.3655-1.9728V11.6a.7664.7664 0 0 0 .3879.6765l5.8144 3.3543-2.0201 1.1685a.0757.0757 0 0 1-.071 0l-4.8303-2.7865A4.504 4.504 0 0 1 2.3408 7.872zm16.5963 3.8558L13.1038 8.364 15.1192 7.2a.0757.0757 0 0 1 .071 0l4.8303 2.7913a4.4944 4.4944 0 0 1-.6765 8.1042v-5.6772a.79.79 0 0 0-.407-.667zm2.0107-3.0231l-.142-.0852-4.7735-2.7818a.7759.7759 0 0 0-.7854 0L9.409 9.2297V6.8974a.0662.0662 0 0 1 .0284-.0615l4.8303-2.7866a4.4992 4.4992 0 0 1 6.6802 4.66zM8.3065 12.863l-2.02-1.1638a.0804.0804 0 0 1-.038-.0567V6.0742a4.4992 4.4992 0 0 1 7.3757-3.4537l-.142.0805L8.704 5.459a.7948.7948 0 0 0-.3927.6813zm1.0976-2.3654l2.602-1.4998 2.6069 1.4998v2.9994l-2.5974 1.4997-2.6067-1.4997Z"/></svg>
<svg class="b" style="left:1178.00px;top:1306.00px" width="28.00" height="24.00" viewBox="1178.00 1306.00 28.00 24.00" fill="none"><path d="M1191.45 1312.9 Q1192.902 1318.048 1198.05 1319.5 Q1192.902 1320.952 1191.45 1326.1 Q1189.998 1320.952 1184.8500000000001 1319.5 Q1189.998 1318.048 1191.45 1312.9 Z" fill="#fbe26a"/><path d="M1197.3 1309.2 Q1198.075 1311.5249999999999 1200.3999999999999 1312.3 Q1198.075 1313.075 1197.3 1315.3999999999999 Q1196.5249999999999 1313.075 1194.2 1312.3 Q1196.5249999999999 1311.5249999999999 1197.3 1309.2 Z" fill="#fbe26a"/><circle cx="1184.9" cy="1313.8" r="1.6" fill="#fde9a0"/></svg>
<svg class="b" style="left:1936.00px;top:1306.00px" width="24.00" height="24.00" viewBox="1936.00 1306.00 24.00 24.00" fill="none"><path d="M1941.8 1312.4 L1952.6 1317.85 L1941.8 1323.3 Q1941 1323.6 1941 1322.6 V1313.1 Q1941 1312.1 1941.8 1312.4 Z" fill="#f2f4f8" stroke="#f2f4f8" stroke-width="3" stroke-linejoin="round"/><path d="M1939.2 1317.85 H1947.8" stroke="#0d1019" stroke-width="1.5"/></svg>
<svg class="b" style="left:1978.00px;top:1306.00px" width="24.00" height="24.00" viewBox="1978.00 1306.00 24.00 24.00" fill="none"><path d="M1983 1311.2 L1996.2 1324.5 M1996.2 1311.2 L1983 1324.5" stroke="#ffffff" stroke-width="2.2" stroke-linecap="round"/></svg>
</div></body></html>
